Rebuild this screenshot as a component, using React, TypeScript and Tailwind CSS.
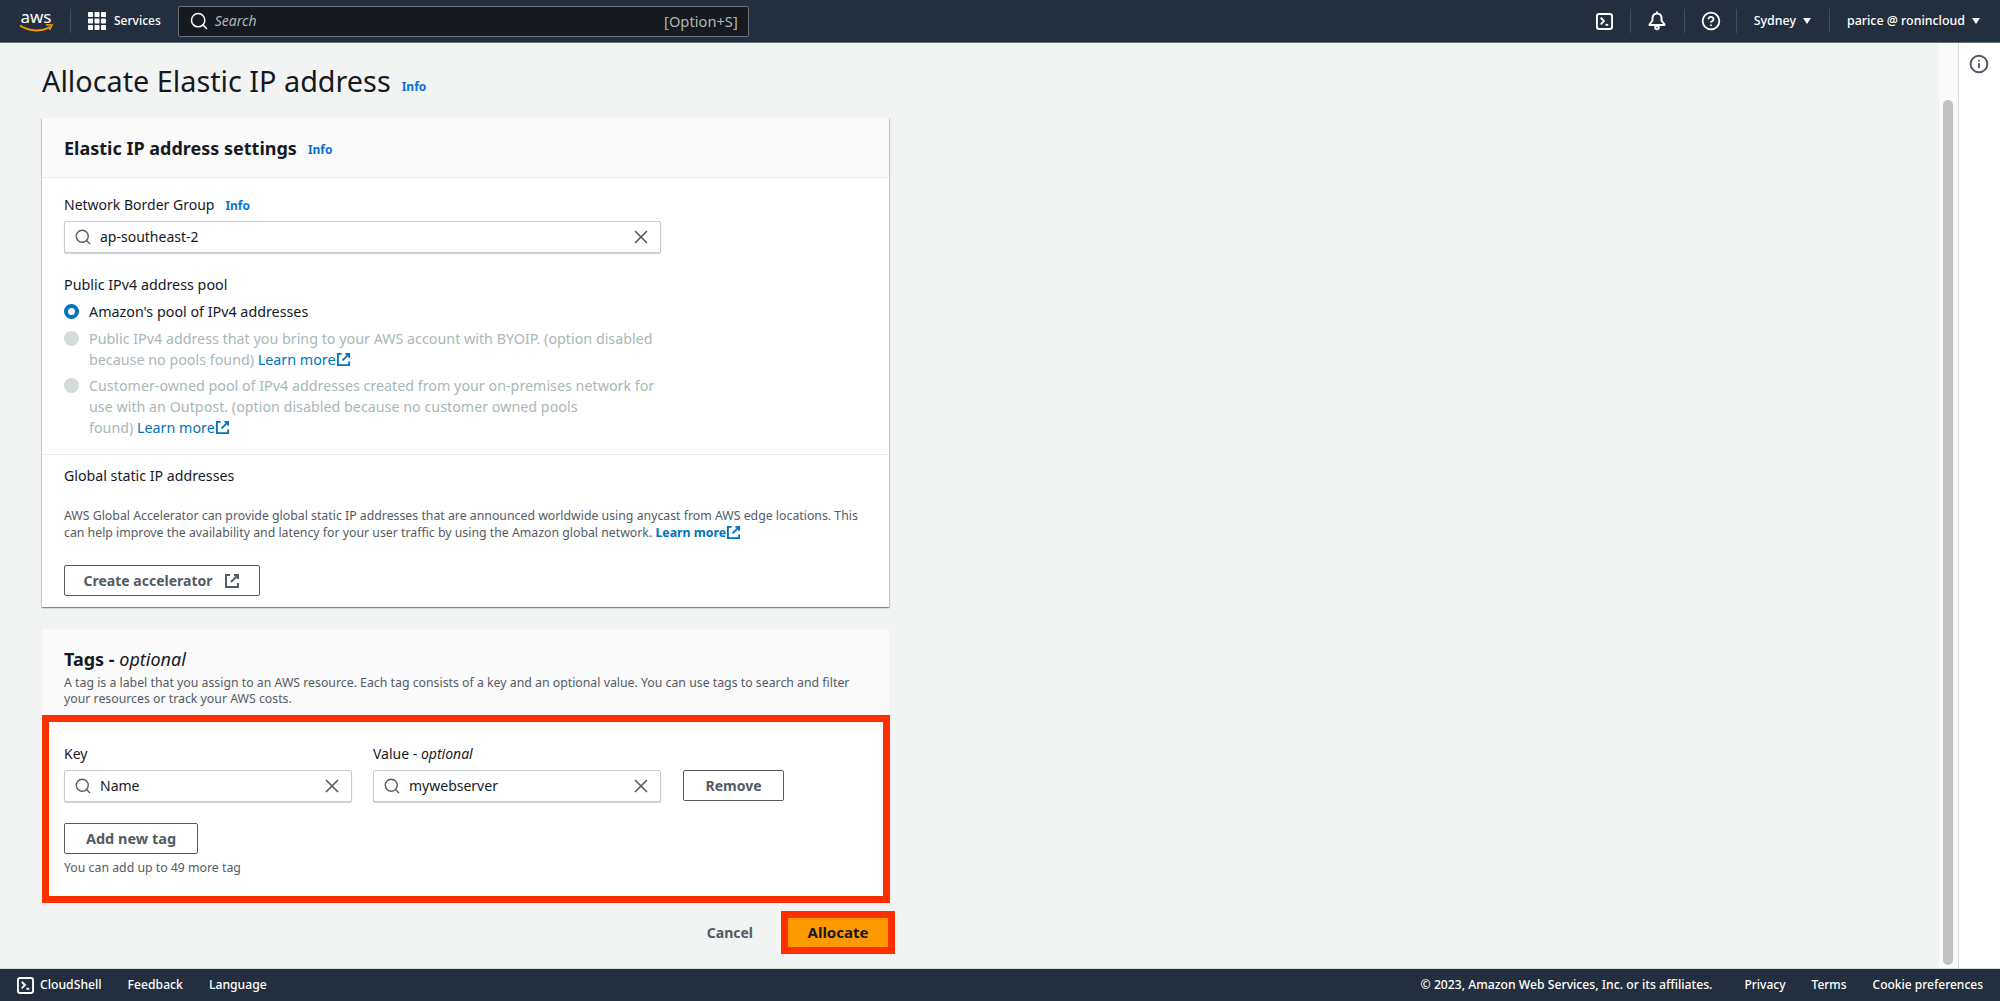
import { CircleHelp, Info, Search, X } from 'lucide-react'

function ExternalIcon({ className }: { className: string }) {
  return (
    <svg viewBox="0 0 16 16" fill="none" stroke="currentColor" strokeWidth="2" className={className}>
      <path d="M10 2h4v4" />
      <path d="M14 2 7 9" />
      <path d="M6 2H2v12h12v-4" />
    </svg>
  )
}

function TerminalIcon({ className }: { className: string }) {
  return (
    <svg viewBox="0 0 18 18" fill="none" stroke="currentColor" strokeWidth="2" className={className}>
      <rect x="1" y="1" width="16" height="16" rx="2.5" />
      <path d="m5 5 3.5 3.5L5 12" />
      <path d="M10 12.5h3" />
    </svg>
  )
}

function BellIcon() {
  return (
    <svg viewBox="0 0 18 20" fill="none" stroke="currentColor" strokeWidth="2" className="h-5 w-[18px]">
      <path d="M9 2.500a4.500 4.500 0 0 1 4.500 4.500v2.500l3 4v.5h-15v-.5l3-4V7A4.500 4.500 0 0 1 9 2.500z" strokeLinejoin="round" />
      <path d="M9 .5v2" />
      <circle cx="9" cy="16.500" r="1.800" />
    </svg>
  )
}

function GridIcon() {
  return (
    <svg viewBox="0 0 18 18" fill="currentColor" className="h-[18px] w-[18px]">
      {[0, 6.5, 13].map((y) =>
        [0, 6.5, 13].map((x) => <rect key={`${x}-${y}`} x={x} y={y} width="5" height="5" rx="0.7" />),
      )}
    </svg>
  )
}

function Caret() {
  return (
    <svg viewBox="0 0 8 6" fill="currentColor" className="h-[6px] w-2">
      <path d="M0 0h8L4 6z" />
    </svg>
  )
}

function Divider() {
  return <span className="block h-6 w-px bg-[#414d5c]" />
}

function InfoLink() {
  return <a className="text-xs font-bold text-[#0972d3]">Info</a>
}

function TokenInput({ value, className }: { value: string; className: string }) {
  return (
    <div className={`flex items-center rounded-[2px] border border-[#c6cccf] bg-white pl-[9px] pr-[8px] text-sm text-[#16191f] shadow-[0_1px_1px_rgba(0,28,36,0.2)] ${className}`}>
      <Search className="h-[18px] w-[18px] text-[#545b64]" strokeWidth={1.8} />
      <span className="ml-[8px] flex-1">{value}</span>
      <X className="h-[22px] w-[22px] text-[#545b64]" strokeWidth={1.8} />
    </div>
  )
}

function OutlineButton({ children, className }: { children: React.ReactNode; className: string }) {
  return (
    <button className={`flex h-[31px] items-center justify-center rounded-[2px] border border-[#545b64] bg-white text-sm font-bold text-[#545b64] ${className}`}>
      {children}
    </button>
  )
}

function LearnMore() {
  return (
    <a className="text-[#0073bb]">
      Learn more
      <ExternalIcon className="inline-block h-[15px] w-[15px] align-[-2px]" />
    </a>
  )
}

function Radio({ disabled, children }: { disabled?: boolean; children: React.ReactNode }) {
  return (
    <div className="flex">
      {disabled ? (
        <span className="mt-[3px] h-[15px] w-[15px] shrink-0 rounded-full bg-[#d5dbdb]" />
      ) : (
        <span className="mt-[3px] h-[15px] w-[15px] shrink-0 rounded-full border-[4px] border-[#0073bb] bg-white" />
      )}
      <div className={`ml-[10px] ${disabled ? 'text-[#aab7b8]' : 'text-[#16191f]'}`}>{children}</div>
    </div>
  )
}

export default function App() {
  return (
    <div className="flex h-[1001px] flex-col overflow-hidden bg-[#f2f3f3] font-['Noto_Sans',sans-serif] text-[#16191f]">
      <header className="flex h-[43px] shrink-0 items-center border-b border-[#687078] bg-[#232f3e] text-white">
        <div className="ml-[19px] flex w-[34px] flex-col items-center">
          <span className="text-[17px] leading-[15px]">aws</span>
          <svg viewBox="0 0 34 9" fill="none" className="h-[9px] w-[34px]">
            <path d="M1 1.5c9 6 21 6.500 30 1.500" stroke="#ff9900" strokeWidth="2" />
            <path d="M27 .8 33 1l-2.500 5" stroke="#ff9900" strokeWidth="1.600" />
          </svg>
        </div>
        <span className="ml-[17px] h-6 w-px bg-[#414d5c]" />
        <div className="ml-[17px] flex items-center gap-2">
          <GridIcon />
          <span className="text-[12px] font-medium">Services</span>
        </div>
        <div className="ml-[17px] flex h-[31px] w-[571px] items-center rounded-[2px] border border-[#687078] bg-[#16191f] pl-[10px] pr-[10px]">
          <Search className="h-5 w-5" strokeWidth={1.8} />
          <span className="ml-[6px] flex-1 text-sm italic text-[#aab7b8]">Search</span>
          <span className="text-[14.7px] text-[#aab7b8]">[Option+S]</span>
        </div>
        <div className="ml-auto flex items-center">
          <TerminalIcon className="h-[17px] w-[17px]" />
          <span className="ml-[17px]"><Divider /></span>
          <span className="ml-[17px]"><BellIcon /></span>
          <span className="ml-[18px]"><Divider /></span>
          <CircleHelp className="ml-[16px] h-5 w-5" strokeWidth={2.2} />
          <span className="ml-[15px]"><Divider /></span>
          <span className="ml-[17px] text-[12.4px] font-medium">Sydney</span>
          <span className="ml-[7px]"><Caret /></span>
          <span className="ml-[18px]"><Divider /></span>
          <span className="ml-[17px] text-[12.4px] font-medium">parice @ ronincloud</span>
          <span className="ml-[7px] mr-[20px]"><Caret /></span>
        </div>
      </header>

      <div className="flex min-h-0 flex-1">
        <main className="min-w-0 flex-1 pl-[42px]">
          <div className="mt-[20px] flex h-9 items-center">
            <h1 className="text-[28.8px] leading-9">Allocate Elastic IP address</h1>
            <span className="ml-[11px] mt-[10px] leading-4"><InfoLink /></span>
          </div>

          <section className="mt-[19px] w-[847px] bg-white shadow-[0_1px_1px_0_rgba(0,28,36,0.3),1px_1px_1px_0_rgba(0,28,36,0.15),-1px_1px_1px_0_rgba(0,28,36,0.15)]">
            <div className="flex h-[60px] items-center border-b border-[#eaeded] bg-[#fafafa] px-[22px]">
              <h2 className="text-lg font-bold">Elastic IP address settings</h2>
              <span className="ml-[11px] mt-[3px] leading-4"><InfoLink /></span>
            </div>
            <div className="px-[22px] pb-[16px] pt-[17px] text-sm">
              <div className="flex h-5 items-center">
                <span>Network Border Group</span>
                <span className="ml-[11px]"><InfoLink /></span>
              </div>
              <TokenInput value="ap-southeast-2" className="mt-[6px] h-[32px] w-[597px]" />
              <p className="mt-[22px] text-[14.3px] leading-5">Public IPv4 address pool</p>
              <div className="mt-[6px] w-[597px] text-[14.3px] leading-[21px]">
                <Radio>Amazon's pool of IPv4 addresses</Radio>
                <div className="mt-[6px]">
                  <Radio disabled>
                    Public IPv4 address that you bring to your AWS account with BYOIP. (option disabled because no pools found) <LearnMore />
                  </Radio>
                </div>
                <div className="mt-[5px]">
                  <Radio disabled>
                    Customer-owned pool of IPv4 addresses created from your on-premises network for use with an Outpost. (option disabled because no customer owned pools
                    <br />
                    found) <LearnMore />
                  </Radio>
                </div>
              </div>
            </div>
            <div className="border-t border-[#eaeded] px-[22px] pb-[11px] pt-[11px]">
              <p className="text-[14.2px] leading-5">Global static IP addresses</p>
              <p className="mt-[21px] w-[810px] text-[12.3px] leading-[17px] text-[#545b64]">
                AWS Global Accelerator can provide global static IP addresses that are announced worldwide using anycast from AWS edge locations. This can help improve the availability and latency for your user traffic by using the Amazon global network.{' '}
                <a className="font-bold text-[#0073bb]">
                  Learn more
                  <ExternalIcon className="inline-block h-[15px] w-[15px] align-[-3px]" />
                </a>
              </p>
              <OutlineButton className="mt-[24px] w-[196px] gap-[12px]">
                Create accelerator
                <ExternalIcon className="h-4 w-4" />
              </OutlineButton>
            </div>
          </section>

          <section className="mt-[22px] w-[847px] bg-white">
            <div className="h-[98px] bg-[#fafafa] px-[22px] pt-[18px]">
              <h2 className="text-lg font-bold leading-6">
                Tags - <em className="font-normal">optional</em>
              </h2>
              <p className="mt-[4px] w-[810px] text-[12.3px] leading-4 text-[#545b64]">
                A tag is a label that you assign to an AWS resource. Each tag consists of a key and an optional value. You can use tags to search and filter your resources or track your AWS costs.
              </p>
            </div>
            <div className="relative px-[22px] pb-[22px] pt-[17px]">
              <span className="absolute -bottom-[5px] left-0 -right-px -top-[12px] border-[7px] border-[#ff2f00]" />
              <div className="flex">
                <div className="w-[288px]">
                  <p className="text-sm leading-5">Key</p>
                  <TokenInput value="Name" className="mt-[6px] h-[32px]" />
                </div>
                <div className="ml-[21px] w-[288px]">
                  <p className="text-sm leading-5">
                    Value - <em>optional</em>
                  </p>
                  <TokenInput value="mywebserver" className="mt-[6px] h-[32px]" />
                </div>
                <OutlineButton className="ml-[22px] mt-[26px] w-[101px]">Remove</OutlineButton>
              </div>
              <OutlineButton className="mt-[21px] w-[134px] text-[14.5px]">Add new tag</OutlineButton>
              <p className="mt-[6px] text-[12.3px] leading-4 text-[#545b64]">You can add up to 49 more tag</p>
            </div>
          </section>

          <div className="mt-[20px] flex w-[846px] items-center justify-end">
            <span className="mr-[35px] text-sm font-bold text-[#545b64]">Cancel</span>
            <button className="h-[29px] w-[100px] bg-[#ff9900] text-[15px] font-bold text-[#16191f] outline-[7px] outline-[#ff2f00]">
              Allocate
            </button>
          </div>
        </main>

        <div className="w-[19px] shrink-0 bg-[#fafafa] pb-[3px] pl-[4px] pr-[5px] pt-[57px]">
          <div className="h-full rounded-full bg-[#c1c1c1]" />
        </div>
        <aside className="w-[42px] shrink-0 border-l border-[#d5dbdb] bg-white pl-[10px] pt-[11px]">
          <Info className="h-5 w-5 text-[#545b64]" strokeWidth={2.4} />
        </aside>
      </div>

      <footer className="flex h-[33px] shrink-0 items-center border-t border-[#d5dbdb] bg-[#232f3e] text-[12.2px] font-medium text-white">
        <TerminalIcon className="ml-[17px] h-[17px] w-[17px]" />
        <span className="ml-[6px]">CloudShell</span>
        <span className="ml-[26px]">Feedback</span>
        <span className="ml-[26px]">Language</span>
        <span className="ml-auto">© 2023, Amazon Web Services, Inc. or its affiliates.</span>
        <span className="ml-[32px] text-[12px]">Privacy</span>
        <span className="ml-[26px] text-[12px]">Terms</span>
        <span className="ml-[26px] mr-[17px] text-[12px]">Cookie preferences</span>
      </footer>
    </div>
  )
}
